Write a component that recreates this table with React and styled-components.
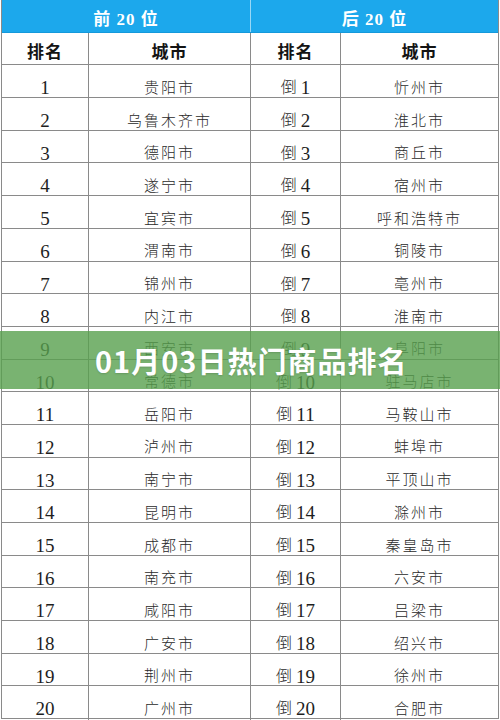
import React from 'react'
import styled, {createGlobalStyle} from 'styled-components'

const Global = createGlobalStyle`
  html, body {
    margin: 0;
    padding: 0;
    background: #fff;
  }
`

const rows = [
  ['贵阳市', '忻州市'],
  ['乌鲁木齐市', '淮北市'],
  ['德阳市', '商丘市'],
  ['遂宁市', '宿州市'],
  ['宜宾市', '呼和浩特市'],
  ['渭南市', '铜陵市'],
  ['锦州市', '亳州市'],
  ['内江市', '淮南市'],
  ['西安市', '阜阳市'],
  ['常德市', '驻马店市'],
  ['岳阳市', '马鞍山市'],
  ['泸州市', '蚌埠市'],
  ['南宁市', '平顶山市'],
  ['昆明市', '滁州市'],
  ['成都市', '秦皇岛市'],
  ['南充市', '六安市'],
  ['咸阳市', '吕梁市'],
  ['广安市', '绍兴市'],
  ['荆州市', '徐州市'],
  ['广州市', '合肥市'],
]

const Page = styled.div`
  position: relative;
  width: 500px;
  height: 720px;
  overflow: hidden;
  font-family: 'Liberation Serif', 'Noto Sans CJK SC', serif;
  color: #222;
`

const Table = styled.div`
  width: 498px;
  border-left: 1px solid #8a8a8a;
  border-right: 1px solid #8a8a8a;
  box-sizing: border-box;
  margin-left: 1px;
`

const Row = styled.div`
  display: grid;
  grid-template-columns: 87px 162px 90px 1fr;
  height: 32.7px;
  box-sizing: border-box;
  border-bottom: 1px solid ${({blue}) => (blue ? '#1599db' : '#8a8a8a')};
  background: ${({blue}) => (blue ? '#1ca8ec' : '#fff')};
`

const Cell = styled.div`
  display: flex;
  align-items: center;
  justify-content: center;
  box-sizing: border-box;
  padding-top: ${({head}) => (head ? '3px' : '8px')};
  grid-column: ${({span}) => (span ? `span ${span}` : 'auto')};
  border-right: ${({last}) => (last ? 'none' : '1px solid #8a8a8a')};
  border-right-color: ${({light}) => (light ? 'rgba(255,255,255,0.55)' : '#8a8a8a')};
  font-size: 15px;
  letter-spacing: 2px;
  font-weight: 300;
  color: #2a2a2a;
  white-space: nowrap;
`

const HeadCell = styled(Cell)`
  font-size: 17px;
  font-weight: 700;
  letter-spacing: 1px;
  color: ${({white}) => (white ? '#fff' : '#141414')};
`

const Num = styled.span`
  font-family: 'Liberation Serif', serif;
  font-size: 19px;
  letter-spacing: 0;
  font-weight: 400;
  color: #1e1e1e;
  padding-top: 4px;
`

const Dao = styled.span`
  font-size: 16px;
  margin-right: 4px;
  letter-spacing: 0;
`

const Banner = styled.div`
  position: absolute;
  left: 0;
  right: 0;
  top: 331px;
  height: 58px;
  background: rgba(88, 160, 78, 0.8);
  display: flex;
  align-items: center;
  padding-left: 95px;
  box-sizing: border-box;
  font-family: 'Noto Sans CJK SC', 'Noto Sans', sans-serif;
  font-weight: 700;
  font-size: 29px;
  letter-spacing: 1px;
  color: #fff;
  text-shadow: 0 1px 2px rgba(0, 0, 0, 0.15);
`

export default function App() {
  return (
    <Page>
      <Global />
      <Table>
        <Row blue>
          <HeadCell head span={2} white light>前 20 位</HeadCell>
          <HeadCell head span={2} white last>后 20 位</HeadCell>
        </Row>
        <Row>
          <HeadCell head>排名</HeadCell>
          <HeadCell head>城市</HeadCell>
          <HeadCell head>排名</HeadCell>
          <HeadCell head last>城市</HeadCell>
        </Row>
        {rows.map(([top, bottom], i) => (
          <Row key={i}>
            <Cell>
              <Num>{i + 1}</Num>
            </Cell>
            <Cell>{top}</Cell>
            <Cell>
              <Dao>倒</Dao>
              <Num>{i + 1}</Num>
            </Cell>
            <Cell last>{bottom}</Cell>
          </Row>
        ))}
      </Table>
      <Banner>01月03日热门商品排名</Banner>
    </Page>
  )
}
